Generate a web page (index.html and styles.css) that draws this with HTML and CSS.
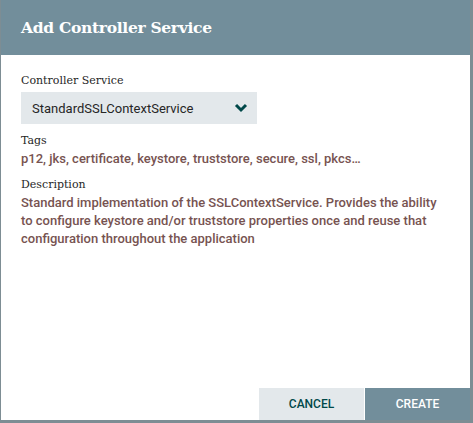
FILE: index.html
```html
<!DOCTYPE html>
<html>
<head>
<meta charset="utf-8">
<link rel="stylesheet" href="styles.css">
</head>
<body>
<div class="page">
  <div class="dialog">
    <div class="header">Add Controller Service</div>
    <div class="content">
      <div class="field">
        <div class="label">Controller Service</div>
        <div class="select">
          <span class="select-text">StandardSSLContextService</span>
          <svg class="chev" width="14" height="10" viewBox="0 0 14 10"><path d="M2 2 L7 7 L12 2" fill="none" stroke="#004849" stroke-width="3"/></svg>
        </div>
      </div>
      <div class="field">
        <div class="label">Tags</div>
        <div class="value">p12, jks, certificate, keystore, truststore, secure, ssl, pkcs…</div>
      </div>
      <div class="field">
        <div class="label">Description</div>
        <div class="value desc">Standard implementation of the SSLContextService. Provides the ability to configure keystore and/or truststore properties once and reuse that configuration throughout the application</div>
      </div>
    </div>
    <div class="actions">
      <button class="btn cancel">Cancel</button>
      <button class="btn create">Create</button>
    </div>
  </div>
</div>
</body>
</html>
```
FILE: styles.css
```css
html, body {
  margin: 0;
  padding: 0;
}
body {
  width: 473px;
  height: 423px;
  background: #7d8d94;
  overflow: hidden;
}
.page {
  padding: 0 3px 3px 1px;
  height: 423px;
  box-sizing: border-box;
}
.dialog {
  background: #ffffff;
  height: 420px;
  display: flex;
  flex-direction: column;
}
.header {
  background: #728e9b;
  height: 55px;
  box-sizing: border-box;
  padding: 17px 0 0 20px;
  color: #ffffff;
  font-family: "DejaVu Serif", serif;
  font-weight: bold;
  font-size: 15.5px;
  line-height: 22px;
  letter-spacing: -0.3px;
}
.content {
  flex: 1;
  padding: 17px 20px 0 20px;
}
.field {
  margin-bottom: 8px;
}
.label {
  font-family: "DejaVu Serif", serif;
  font-size: 11px;
  line-height: 18px;
  color: #262626;
}
.select {
  margin-top: 2px;
  width: 236px;
  height: 32px;
  background: #e3e8eb;
  display: flex;
  align-items: center;
  justify-content: space-between;
  box-sizing: border-box;
  padding: 0 9px 0 11px;
  margin-bottom: 6px;
}
.select-text {
  font-family: Roboto, sans-serif;
  font-size: 13px;
  color: #262626;
}
.value {
  font-family: Roboto, sans-serif;
  font-weight: 500;
  font-size: 13px;
  line-height: 18px;
  color: #775351;
}
.actions {
  display: flex;
  justify-content: flex-end;
  height: 32px;
}
.btn {
  border: 0;
  margin: 0;
  width: 105px;
  height: 32px;
  font-family: Roboto, sans-serif;
  font-weight: 500;
  font-size: 12px;
  text-transform: uppercase;
  cursor: pointer;
}
.cancel {
  background: #e3e8eb;
  color: #004849;
  margin-right: 1px;
}
.create {
  background: #728e9b;
  color: #ffffff;
}
```
